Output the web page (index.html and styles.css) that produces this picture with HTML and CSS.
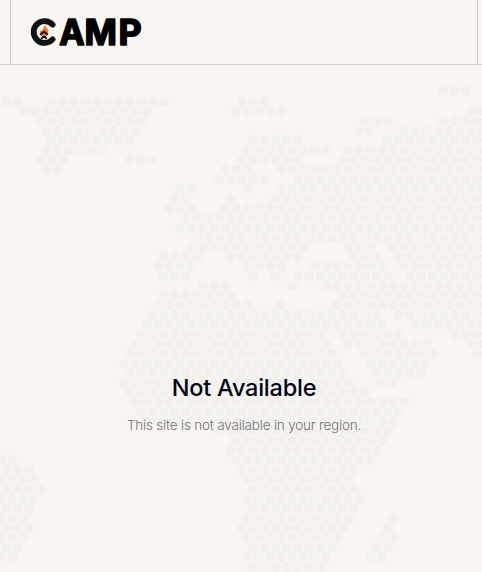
FILE: index.html
```
<!DOCTYPE html>
<html lang="en">
<head>
  <meta charset="UTF-8" />
  <meta name="viewport" content="width=device-width, initial-scale=1.0"/>
  <title>CAMP - Not Available</title>
  <link rel="stylesheet" href="styles.css">
</head>
<body>

<svg class="world-map" id="map" aria-hidden="true"></svg>

<header class="header">
  <div class="header-inner">
    <svg class="logo" viewBox="0 -10 116 50" role="img" aria-label="CAMP">
      <path class="logo-ring" d="M22.6 7.6A10.9 10.9 0 1 0 22.6 22.4"/>
      <path class="logo-flame" d="M15.2 7.6C15.6 10.4 18.7 12.2 18.3 15.4C18.1 17.2 17.2 18.2 16.6 18.6L10.9 18.6C9.4 17.2 9.4 14.8 10.7 13L11.9 14.2C13.2 12.3 13.7 10 15.2 7.6Z"/>
      <path class="logo-tent" d="M10.3 18L14 14.4L17.7 18M11.2 21.8L14 19.2L16.8 21.8"/>
      <text class="logo-text" y="28"><tspan x="29.2" textLength="25.4" lengthAdjust="spacingAndGlyphs">A</tspan><tspan x="54.4" textLength="32.4" lengthAdjust="spacingAndGlyphs">M</tspan><tspan x="88.4" textLength="23.2" lengthAdjust="spacingAndGlyphs">P</tspan></text>
    </svg>
  </div>
</header>

<main class="content">
  <h1 class="title">Not Available</h1>
  <p class="message">This site is not available in your region.</p>
</main>

<script src="map.js"></script>
</body>
</html>
```
FILE: styles.css
```
body {
  margin: 0;
  min-height: 100vh;
  display: flex;
  flex-direction: column;
  background: #f9f6f1;
  font-family: Inter, 'Open Sans', sans-serif;
  overflow: hidden;
}

.world-map {
  position: absolute;
  top: 0;
  left: 0;
  width: 100%;
  height: 100%;
  z-index: -1;
  fill: #f2f1ed;
}

.header {
  border-bottom: 1px solid #cfcfcf;
}

.header-inner {
  height: 64px;
  box-sizing: border-box;
  margin: 0 4px 0 10px;
  padding: 7px 19px;
  border-left: 1px solid #cfcfcf;
  border-right: 1px solid #cfcfcf;
}

.logo {
  display: block;
  width: 116px;
  height: 50px;
}

.logo-ring {
  fill: none;
  stroke: #111;
  stroke-width: 5.8;
  stroke-linecap: round;
}

.logo-flame {
  fill: #ff7a1a;
}

.logo-tent {
  fill: none;
  stroke: #111;
  stroke-width: 2;
  stroke-linejoin: round;
}

.logo-text {
  font-size: 35.5px;
  font-weight: 700;
  stroke: #000;
  stroke-width: 1.6;
  stroke-linejoin: round;
}

.content {
  flex: 1;
  padding: 308px 4px 0 10px;
  text-align: center;
}

.title {
  margin: 0;
  font-size: 23.5px;
  line-height: 30px;
  font-weight: 500;
  letter-spacing: -0.22px;
  color: #020617;
}

.message {
  margin: 12px 0 0;
  font-size: 13.5px;
  line-height: 20px;
  font-weight: 300;
  letter-spacing: -0.2px;
  color: #737373;
}
```
FILE: map.js
```
// each row holds [first, last] column pairs
const rows = [
  [[0,1],[4,14],[21,23]],
  [[2,13],[21,25],[42,43]],
  [[3,12],[32,34],[39,43]],
  [[4,12],[32,33],[36,43]],
  [[4,11],[22,26],[34,43]],
  [[4,9],[22,29],[31,43]],
  [[3,5],[11,13],[21,26],[30,43]],
  [[4,5],[20,22],[25,43]],
  [[19,23],[26,43]],
  [[16,17],[22,22],[25,43]],
  [[15,16],[20,20],[24,43]],
  [[15,17],[20,43]],
  [[16,43]],
  [[16,43]],
  [[17,43]],
  [[17,27],[31,33],[35,43]],
  [[14,17],[20,26],[31,33],[35,43]],
  [[14,17],[22,25],[28,34],[36,43]],
  [[14,16],[22,22],[24,24],[26,34],[36,43]],
  [[18,20],[26,26],[29,43]],
  [[14,20],[30,43]],
  [[14,22],[25,25],[30,43]],
  [[13,33],[35,43]],
  [[13,34],[37,43]],
  [[12,28],[30,35],[40,43]],
  [[12,29],[31,38],[42,43]],
  [[11,29],[32,38],[42,43]],
  [[11,30],[33,38]],
  [[11,30],[33,37]],
  [[11,31],[34,35]],
  [[11,32]],
  [[12,36]],
  [[12,35]],
  [[13,35]],
  [[19,34]],
  [[21,34]],
  [[-1,-1],[20,33]],
  [[0,1],[21,33]],
  [[0,2],[21,31]],
  [[0,3],[22,31]],
  [[0,3],[22,31]],
  [[0,3],[22,32]],
  [[0,2],[22,31]],
  [[0,2],[22,31],[35,35]],
  [[0,2],[21,30],[34,34]],
  [[0,2],[22,30],[34,35]],
  [[0,1],[22,29],[33,34]],
  [[0,1],[22,29],[33,34]],
  [[-1,-1],[22,28]],
  [[22,28]]
];

let path = '';

function addHex(x, y) {
  path += `M${x.toFixed(1)} ${(y - 5.4).toFixed(1)}l4.8 2.6v5.6l-4.8 2.6l-4.8 -2.6v-5.6z`;
}

rows.forEach((row, i) => {
  const left = i % 2 ? 1.1 : 6.7;
  row.forEach(([from, to]) => {
    for (let c = from; c <= to; c++) {
      addHex(left + c * 11.2, 101.7 + i * 9.69);
    }
  });
});

// islands in the far north
[443.4, 454.6, 465.8].forEach(x => addHex(x, 90.6));

document.getElementById('map').innerHTML = `<path d="${path}"/>`;
```
